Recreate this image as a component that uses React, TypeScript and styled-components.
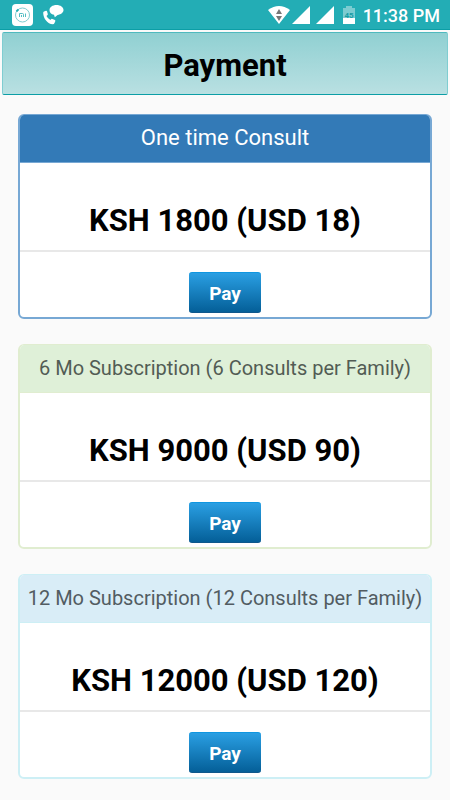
import React from 'react'
import styled, { createGlobalStyle } from 'styled-components'

type Variant = 'primary' | 'success' | 'info'

const variants: Record<
  Variant,
  { border: string; heading: string; color: string; fontSize: string }
> = {
  primary: {
    border: '#77a8d4',
    heading: '#337ab7',
    color: '#fff',
    fontSize: '22px',
  },
  success: {
    border: '#e0edd0',
    heading: '#dff0d8',
    color: '#525c54',
    fontSize: '20px',
  },
  info: {
    border: '#cdeff5',
    heading: '#d9edf7',
    color: '#525c62',
    fontSize: '20px',
  },
}

const GlobalStyle = createGlobalStyle`
  * {
    box-sizing: border-box;
  }

  body {
    margin: 0;
    background: #fafafa;
    color: #000;
    font-family: Roboto, 'Noto Sans', sans-serif;
  }
`

const StatusBar = styled.div`
  display: flex;
  justify-content: space-between;
  align-items: center;
  height: 30px;
  padding: 0 10px 0 12px;
  border-bottom: 1px solid #0c9ea6;
  background: #23adb5;
  color: #fff;
`

const StatusGroup = styled.div`
  display: flex;
  align-items: center;

  svg {
    display: block;
  }
`

const Clock = styled.span`
  margin-left: 8px;
  padding-top: 2px;
  font-size: 18px;
  line-height: 24px;
  font-weight: 500;
`

const Header = styled.header`
  display: flex;
  justify-content: center;
  align-items: center;
  height: 63px;
  margin: 2px 2px 0;
  border: 1px solid #7fcdd1;
  border-top-color: #4fb9be;
  border-bottom-color: #0c9ea6;
  border-radius: 2px;
  background: linear-gradient(#90d0d2, #b9e0e2);
`

const Title = styled.h1`
  margin: 0;
  padding-top: 4px;
  font-size: 31px;
  line-height: 40px;
  font-weight: 700;
`

const Plans = styled.main`
  display: flex;
  flex-direction: column;
  gap: 25px;
  padding: 19px 18px 20px;
`

const Panel = styled.section<{ $variant: Variant }>`
  overflow: hidden;
  border: 2px solid ${({ $variant }) => variants[$variant].border};
  border-top-width: 1px;
  border-radius: 6px;
  background: #fff;
  text-align: center;
`

const PanelHeading = styled.h2<{ $variant: Variant }>`
  margin: 0;
  padding: 8px 0 9px;
  border-bottom: 1px solid ${({ $variant }) => variants[$variant].border};
  background: ${({ $variant }) => variants[$variant].heading};
  color: ${({ $variant }) => variants[$variant].color};
  font-size: ${({ $variant }) => variants[$variant].fontSize};
  line-height: 30px;
  font-weight: 400;
  white-space: nowrap;
`

const Price = styled.p`
  margin: 0;
  padding: 38px 0 9px;
  font-size: 31px;
  line-height: 40px;
  font-weight: 700;
`

const PanelFooter = styled.div`
  padding: 20px 0 4px;
  border-top: 2px solid #e8e8e8;
`

const PayButton = styled.button`
  display: block;
  width: 72px;
  height: 41px;
  margin: 0 auto;
  padding: 2px 0 0;
  border: 0;
  border-top: 1px solid #0f96e0;
  border-bottom: 1px solid #0f588c;
  border-radius: 3px;
  background: linear-gradient(#2a9fe3, #045f98);
  color: #fff;
  font: 700 19px/24px Roboto, 'Noto Sans', sans-serif;
`

const MiIcon = () => (
  <svg width="21" height="22" viewBox="0 0 21 22" fill="none">
    <rect width="21" height="22" rx="4" fill="#fff" />
    <circle cx="10.5" cy="11" r="7" stroke="#7fcdd1" />
    <path d="M4.500 7.500a7 7 0 0 1 2-2" stroke="#23adb5" strokeWidth="2" />
    <path
      d="M7.500 13V9.500h3q1 0 1 1V13M9.500 11v2M13.500 9.500V13"
      stroke="#55bdc3"
    />
  </svg>
)

const CallIcon = () => (
  <svg width="21" height="20" viewBox="0 0 21 20" fill="#fff">
    <path d="M1 6.600 3 5.700q.8-.2 1 .6l.8 2.700q.1.700-.5 1.200l-.8.700q1.300 2.800 3.900 4l.9-.9q.5-.4 1.100-.1l2.500 1.200q.7.400.4 1.100l-.8 1.900q-.4 1.200-1.700 1.200C4.500 19 .3 13.500.2 8q0-1 .8-1.400Z" />
    <path d="M13.500 0C9.500 0 6.500 2.200 6.500 5.200c0 2.300 1.700 4 4.500 4.600l.8 2.400 2.800-2.200c3.400-.3 5.900-2.300 5.900-4.900C20.500 2.200 17.500 0 13.500 0Z" />
  </svg>
)

const WifiIcon = () => (
  <svg width="22" height="18" viewBox="0 0 22 18">
    <path d="M0 4Q11-4 22 4L11 18Z" fill="#fff" />
    <path d="M8 8 11 3l3 5ZM8 10h6l-3 5Z" fill="#777" />
  </svg>
)

const SignalIcon = () => (
  <svg width="18" height="18" viewBox="0 0 18 18" fill="#fff">
    <path d="M18 0v18H0Z" />
  </svg>
)

const BatteryIcon = () => (
  <svg width="12" height="18" viewBox="0 0 12 18">
    <path d="M3 0h6v2h3v16H0V2h3Z" fill="#7bccd1" />
    <path d="M0 12h12v6H0Z" fill="#fff" />
    <text
      x="6"
      y="12"
      fill="#169ca4"
      fontFamily="Roboto"
      fontSize="8"
      fontWeight="700"
      textAnchor="middle"
    >
      45
    </text>
  </svg>
)

const LeftIcons = styled(StatusGroup)`
  gap: 10px;
`

const RightIcons = styled(StatusGroup)`
  svg + svg {
    margin-left: 2px;
  }

  svg:nth-of-type(3) {
    margin-left: 6px;
  }

  svg:nth-of-type(4) {
    margin-left: 9px;
  }
`

type Plan = {
  name: string
  price: string
  variant: Variant
}

const plans: Plan[] = [
  {
    name: 'One time Consult',
    price: 'KSH 1800 (USD 18)',
    variant: 'primary',
  },
  {
    name: '6 Mo Subscription (6 Consults per Family)',
    price: 'KSH 9000 (USD 90)',
    variant: 'success',
  },
  {
    name: '12 Mo Subscription (12 Consults per Family)',
    price: 'KSH 12000 (USD 120)',
    variant: 'info',
  },
]

const PlanPanel: React.FC<Plan> = ({ name, price, variant }) => (
  <Panel $variant={variant}>
    <PanelHeading $variant={variant}>{name}</PanelHeading>
    <Price>{price}</Price>
    <PanelFooter>
      <PayButton type="button">Pay</PayButton>
    </PanelFooter>
  </Panel>
)

const App: React.FC = () => (
  <>
    <GlobalStyle />
    <StatusBar>
      <LeftIcons>
        <MiIcon />
        <CallIcon />
      </LeftIcons>
      <RightIcons>
        <WifiIcon />
        <SignalIcon />
        <SignalIcon />
        <BatteryIcon />
        <Clock>11:38 PM</Clock>
      </RightIcons>
    </StatusBar>
    <Header>
      <Title>Payment</Title>
    </Header>
    <Plans>
      {plans.map((plan) => (
        <PlanPanel key={plan.name} {...plan} />
      ))}
    </Plans>
  </>
)

export default App
